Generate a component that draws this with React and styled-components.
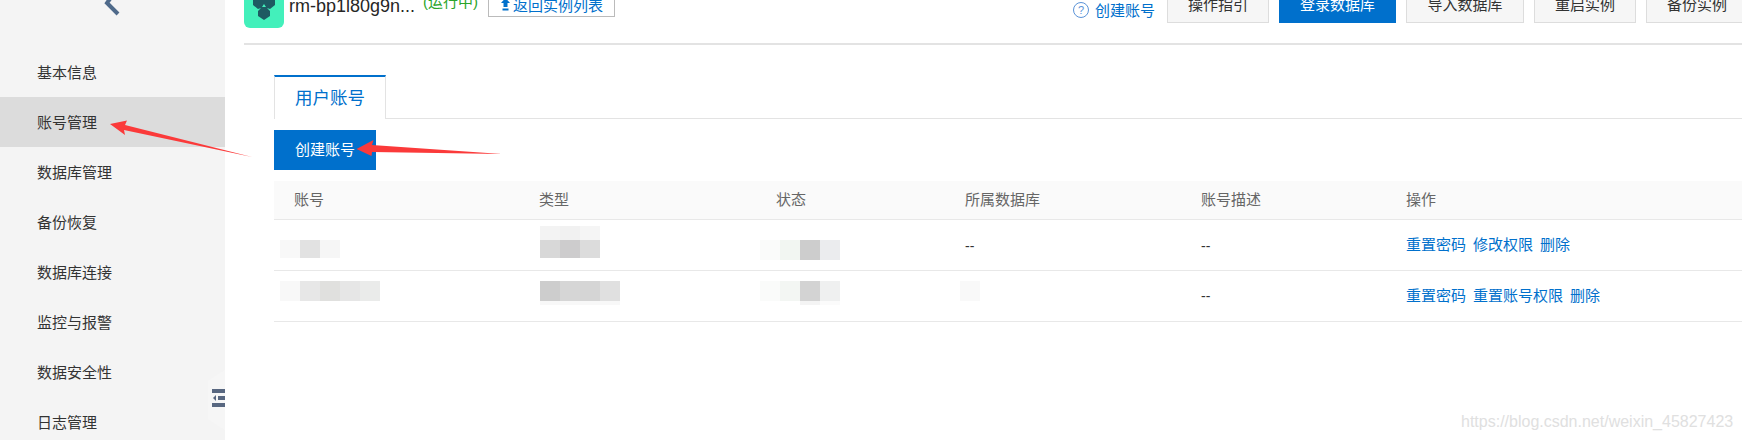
import React from "react";
import styled, { createGlobalStyle } from "styled-components";

const Global = createGlobalStyle`
  html, body { margin: 0; padding: 0; background: #fff; }
  body { font-family: "Liberation Sans", "Noto Sans CJK SC", sans-serif; }
  * { box-sizing: border-box; }
`;
const Page = styled.div`
  position: relative; width: 1742px; height: 440px; overflow: hidden;
  display: flex; background: #fff;
`;
const Sidebar = styled.aside`
  position: relative; width: 225px; flex: none; background: #f4f4f4; display: flex; flex-direction: column;
`;
const BackRow = styled.div`
  height: 47px; flex: none; display: flex; justify-content: flex-start; padding-left: 103px; color: #4f6a8a;
`;
const NavItem = styled.div`
  height: 50px; flex: none; display: flex; align-items: center; padding: 0 0 2px 37px;
  font-size: 15px; color: #333; background: ${p => (p.$active ? "#dcdcdc" : "transparent")};
`;
const Handle = styled.div`
  position: absolute; right: 0; top: 370px; width: 17px; height: 60px; background: #f6f6f6;
  clip-path: polygon(100% 0, 0 18%, 0 82%, 100% 100%);
`;
const Collapse = styled.div`
  position: absolute; right: 0; top: 389px; width: 13px; height: 18px;
  display: flex; flex-direction: column; justify-content: space-between; align-items: flex-end;
`;
const CollapseBar = styled.span`
  display: block; height: 4px; width: ${p => p.$w}px; background: #586780;
`;
const CollapseMiddle = styled.div`
  display: flex; align-items: center; gap: 2px; height: 4px;
`;
const CollapseArrow = styled.span`
  display: block; width: 0; height: 0;
  border-top: 3px solid transparent; border-bottom: 3px solid transparent; border-right: 3px solid #586780;
`;
const Main = styled.main`
  flex: 1; min-width: 0; padding-left: 19px; display: flex; flex-direction: column;
`;
const Header = styled.header`
  margin-top: -13px; height: 58px; flex: none; border-bottom: 2px solid #e3e3e3;
  display: flex; align-items: flex-start;
`;
const Logo = styled.div`
  width: 40px; height: 41px; flex: none; background: #43f0bb; border-radius: 6px; margin-right: 5px;
  display: flex; justify-content: center;
`;
const Title = styled.div`
  font-size: 18px; line-height: 38px; color: #262626; margin-right: 8px; white-space: nowrap;
`;
const StatusText = styled.div`
  font-size: 15px; line-height: 30px; color: #2aa52a; margin-right: 10px; white-space: nowrap;
`;
const BackButton = styled.div`
  width: 127px; height: 30px; border: 1px solid #bbb; display: flex; align-items: center; justify-content: center; gap: 2px;
  font-size: 15px; color: #0070cc; background: #fff; white-space: nowrap; padding-top: 4px;
`;
const Spacer = styled.div`flex: 1;`;
const HelpLink = styled.div`
  height: 36px; display: flex; align-items: center; gap: 5px; font-size: 15px; color: #0070cc; margin-right: 12px;
  padding-top: 9px; white-space: nowrap;
`;
const HeadButtons = styled.div`
  display: flex; gap: 10px; margin-right: -6px;
`;
const HeadButton = styled.div`
  height: 36px; width: ${p => p.$w}px; display: flex; align-items: center; justify-content: center;
  font-size: 15px; white-space: nowrap; padding-bottom: 4px;
  background: ${p => (p.$primary ? "#0070cc" : "#f6f6f6")};
  color: ${p => (p.$primary ? "#fff" : "#333")};
  border: 1px solid ${p => (p.$primary ? "#0070cc" : "#ddd")};
`;
const Content = styled.div`
  padding: 30px 0 0 30px; display: flex; flex-direction: column;
`;
const Tabs = styled.div`
  height: 44px; border-bottom: 1px solid #e3e3e3; display: flex; flex: none;
`;
const Tab = styled.div`
  width: 112px; height: 44px; border: 1px solid #e3e3e3; border-top: 2px solid #0070cc; border-bottom: 0;
  background: #fff; display: flex; align-items: center; justify-content: center; padding-bottom: 4px;
  font-size: 17.5px; color: #0070cc;
`;
const CreateButton = styled.div`
  margin-top: 11px; width: 102px; height: 40px; flex: none; background: #0070cc; color: #fff; padding-bottom: 3px;
  display: flex; align-items: center; justify-content: center; font-size: 15px;
`;
const Table = styled.div`
  margin-top: 11px; display: flex; flex-direction: column;
`;
const Row = styled.div`
  display: grid; grid-template-columns: 245px 237px 189px 236px 205px 1fr;
  height: ${p => (p.$head ? 39 : 51)}px; flex: none; align-items: center;
  border-bottom: 1px solid #e8e8e8; font-size: 15px; color: ${p => (p.$head ? "#666" : "#333")};
  background: ${p => (p.$head ? "#fafafa" : "#fff")};
`;
const Cell = styled.div`
  padding-left: 20px; white-space: nowrap; display: flex; align-items: center;
`;
const HeadCell = styled(Cell)`
  padding-bottom: 4px;
`;
const Dash = styled.span`
  font-size: 14px; padding-top: ${p => p.$drop || 0}px;
`;
const Actions = styled.div`
  display: flex; gap: 7px; color: #0070cc; font-size: 15px; white-space: nowrap; padding: 0 0 4px 20px;
`;
const MosaicWrap = styled.div`
  margin-left: ${p => p.$x}px; margin-top: ${p => p.$y}px;
  display: flex; flex-direction: column;
`;
const MosaicLine = styled.div`
  display: flex; height: ${p => p.$h}px;
`;
const Tile = styled.span`
  display: block; width: 20px; height: 100%; background: ${p => p.$c};
`;
const Mosaic = ({ x, y, lines }) => (
  <MosaicWrap $x={x} $y={y}>
    {lines.map((l, i) => (
      <MosaicLine key={i} $h={l.h}>
        {l.c.map((c, j) => <Tile key={j} $c={c} />)}
      </MosaicLine>
    ))}
  </MosaicWrap>
);
const Overlay = styled.svg`
  position: absolute; left: 0; top: 0; pointer-events: none;
`;
const Watermark = styled.div`
  position: absolute; left: 1461px; top: 412px; font-size: 16px; line-height: 20px; color: #e0e0e0; white-space: nowrap;
`;

const nav = ["基本信息", "账号管理", "数据库管理", "备份恢复", "数据库连接", "监控与报警", "数据安全性", "日志管理"];

export default function App() {
  return (
    <Page>
      <Global />
      <Sidebar>
        <BackRow>
          <svg width="18" height="18" viewBox="0 0 18 18" aria-hidden="true">
            <path d="M9 -4 L4 3 L15 14" fill="none" stroke="currentColor" strokeWidth="4" />
          </svg>
        </BackRow>
        {nav.map((n, i) => <NavItem key={n} $active={i === 1}>{n}</NavItem>)}
        <Handle />
        <Collapse>
          <CollapseBar $w={13} />
          <CollapseMiddle><CollapseArrow /><CollapseBar $w={7} /></CollapseMiddle>
          <CollapseBar $w={13} />
        </Collapse>
      </Sidebar>
      <Main>
        <Header>
          <Logo>
            <svg width="22" height="41" viewBox="0 0 22 41" aria-hidden="true">
              <path d="M0 12 L5 8 L10 10 L12 10 L17 8 L22 12 L22 18 L17 22 L14 21 L17 24 L17 29 L11 33 L5 29 L5 24 L8 21 L5 22 L0 18Z" fill="#1e5a62" />
              <path d="M11 17 L13 20 L9 20Z" fill="#43f0bb" />
            </svg>
          </Logo>
          <Title>rm-bp1l80g9n...</Title>
          <StatusText>(运行中)</StatusText>
          <BackButton>
            <svg width="11" height="14" viewBox="0 0 11 14" aria-hidden="true">
              <path d="M5.5 1 L10 6 L7.5 6 L7.5 10 L3.5 10 L3.5 6 L1 6Z M2.5 11.5 L8.5 11.5 L8.5 13.5 L2.5 13.5Z" fill="#0070cc" />
            </svg>
            返回实例列表
          </BackButton>
          <Spacer />
          <HelpLink>
            <svg width="18" height="18" viewBox="0 0 18 18" aria-hidden="true">
              <circle cx="9" cy="9" r="7.5" fill="none" stroke="#5b93d8" strokeWidth="1" />
              <text x="9" y="13" fontSize="11" textAnchor="middle" fill="#5b93d8" fontFamily="Liberation Sans">?</text>
            </svg>
            创建账号
          </HelpLink>
          <HeadButtons>
            <HeadButton $w={102}>操作指引</HeadButton>
            <HeadButton $w={117} $primary>登录数据库</HeadButton>
            <HeadButton $w={118}>导入数据库</HeadButton>
            <HeadButton $w={102}>重启实例</HeadButton>
            <HeadButton $w={102}>备份实例</HeadButton>
          </HeadButtons>
        </Header>
        <Content>
          <Tabs><Tab>用户账号</Tab></Tabs>
          <CreateButton>创建账号</CreateButton>
          <Table>
            <Row $head>
              <HeadCell>账号</HeadCell><HeadCell>类型</HeadCell><HeadCell>状态</HeadCell><HeadCell>所属数据库</HeadCell><HeadCell>账号描述</HeadCell><HeadCell>操作</HeadCell>
            </Row>
            <Row>
              <Cell>
                <Mosaic x={-14} y={8} lines={[{ h: 18, c: ["#f8f8f8", "#e2e2e2", "#f6f6f6"] }]} />
              </Cell>
              <Cell>
                <Mosaic x={1} y={-6} lines={[{ h: 14, c: ["#f3f3f3", "#f1f1f1", "#f5f5f5"] }, { h: 18, c: ["#d8d8d8", "#cdcccd", "#dcdcdc"] }]} />
              </Cell>
              <Cell>
                <Mosaic x={-16} y={10} lines={[{ h: 20, c: ["#fafbfa", "#f2f6f2", "#cdcdcd", "#ebecee"] }]} />
              </Cell>
              <Cell><Dash $drop={2}>--</Dash></Cell>
              <Cell><Dash $drop={2}>--</Dash></Cell>
              <Actions><span>重置密码</span><span>修改权限</span><span>删除</span></Actions>
            </Row>
            <Row>
              <Cell>
                <Mosaic x={-14} y={-10} lines={[{ h: 20, c: ["#f8f8f8", "#e7e7e7", "#e0e0de", "#e6e6e6", "#eaebea"] }]} />
              </Cell>
              <Cell>
                <Mosaic x={1} y={-6} lines={[{ h: 20, c: ["#cdcdcd", "#d6d6d6", "#d5d5d5", "#e0e0e0"] }, { h: 4, c: ["#f8f8f8", "#f8f8f8", "#f8f8f8", "#f8f8f8"] }]} />
              </Cell>
              <Cell>
                <Mosaic x={-16} y={-6} lines={[{ h: 20, c: ["#fafbfa", "#f3f6f3", "#d3d3d3", "#eff0f0"] }, { h: 4, c: ["#fff", "#fff", "#f4f4f4", "#fbfbfb"] }]} />
              </Cell>
              <Cell>
                <Mosaic x={-5} y={-10} lines={[{ h: 20, c: ["#f9f9f9"] }]} />
              </Cell>
              <Cell><Dash>--</Dash></Cell>
              <Actions><span>重置密码</span><span>重置账号权限</span><span>删除</span></Actions>
            </Row>
          </Table>
        </Content>
      </Main>
      <Overlay width="1742" height="440" viewBox="0 0 1742 440" aria-hidden="true">
        <path d="M110 124 L127 120.5 L125 125 L252 157 L124 130 L125 135 Z" fill="#fb3a3a" />
        <path d="M356.5 149 L373.5 140 L372 145 L502 154 L372 152 L371.5 156 Z" fill="#fb3a3a" />
      </Overlay>
      <Watermark>https://blog.csdn.net/weixin_45827423</Watermark>
    </Page>
  );
}
